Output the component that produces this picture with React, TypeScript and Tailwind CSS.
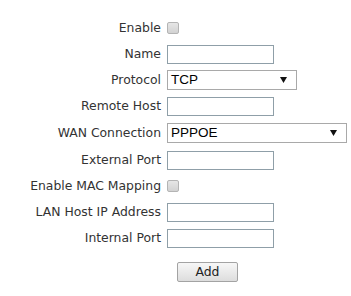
const Label = ({ text }: { text: string }) => (
  <div className="text-right text-[12.4px] text-[#333] whitespace-nowrap">{text}</div>
)

const TextBox = () => (
  <input
    type="text"
    className="w-[107px] h-[19px] border border-[#8f9fa8] bg-white outline-none px-1"
  />
)

const Check = () => (
  <input
    type="checkbox"
    className="appearance-none w-[12px] h-[12px] rounded-[2px] border border-[#b4b4b4] bg-gradient-to-b from-[#e6e6e6] to-[#d2d2d2] m-0"
  />
)

const Select = ({ value, width }: { value: string; width: string }) => (
  <div
    className={`${width} h-[20px] border border-[#a9a9a9] bg-white flex items-center justify-between pl-[3px] pr-[9px]`}
    style={{ fontFamily: '"Liberation Sans", Arial, sans-serif' }}
  >
    <span className="text-[13.5px] text-black leading-none">{value}</span>
    <svg width="7" height="6" viewBox="0 0 7 6">
      <path d="M0 0 H7 L3.5 6 Z" fill="#111" />
    </svg>
  </div>
)

const Row = ({ label, h, children }: { label: string; h: string; children: React.ReactNode }) => (
  <div className={`grid grid-cols-[161px_auto] gap-x-[6px] items-center ${h}`}>
    <Label text={label} />
    <div className="flex items-center">{children}</div>
  </div>
)

export default function App() {
  return (
    <div
      className="w-[351px] h-[296px] bg-white pt-[15px]"
      style={{ fontFamily: '"DejaVu Sans", Verdana, sans-serif' }}
    >
      <Row label="Enable" h="h-[26px]"><Check /></Row>
      <Row label="Name" h="h-[26px]"><TextBox /></Row>
      <Row label="Protocol" h="h-[26px]"><Select value="TCP" width="w-[130px]" /></Row>
      <Row label="Remote Host" h="h-[26px]"><TextBox /></Row>
      <Row label="WAN Connection" h="h-[28px]"><Select value="PPPOE" width="w-[180px]" /></Row>
      <Row label="External Port" h="h-[26px]"><TextBox /></Row>
      <Row label="Enable MAC Mapping" h="h-[26px]"><Check /></Row>
      <Row label="LAN Host IP Address" h="h-[26px]"><TextBox /></Row>
      <Row label="Internal Port" h="h-[26px]"><TextBox /></Row>
      <div className="pl-[177px] pt-[8px]">
        <button className="w-[61px] h-[20px] border border-[#a3a3a3] rounded-[2px] bg-gradient-to-b from-[#f7f7f7] to-[#dddddd] text-[12.4px] text-[#222] leading-none">
          Add
        </button>
      </div>
    </div>
  )
}
